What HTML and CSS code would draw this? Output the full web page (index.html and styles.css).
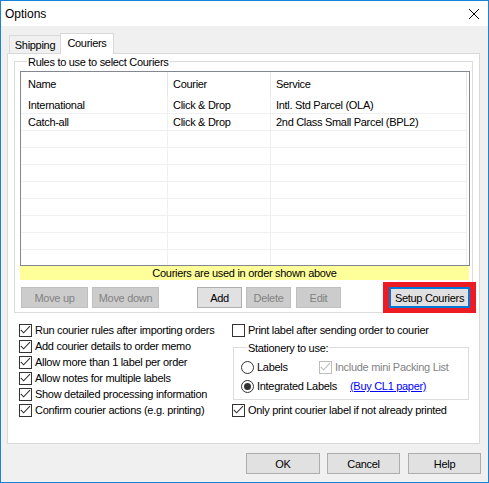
FILE: index.html
```html
<!DOCTYPE html>
<html>
<head>
<meta charset="utf-8">
<title>Options</title>
<link rel="stylesheet" href="styles.css">
</head>
<body>
<div class="window">
  <div class="titlebar">
    <span class="title">Options</span>
    <svg class="close" viewBox="0 0 10 10"><path d="M0 0 L10 10 M10 0 L0 10" stroke="#000" stroke-width="1" fill="none"/></svg>
  </div>
  <div class="content">
    <div class="tabs">
      <div class="tab">Shipping</div>
      <div class="tab active">Couriers</div>
    </div>
    <div class="panel">
      <div class="group rules">
        <div class="legend">Rules to use to select Couriers</div>
        <div class="list">
          <div class="lrow head"><div class="cell c1">Name</div><div class="cell">Courier</div><div class="cell">Service</div></div>
          <div class="lrow"><div class="cell c1">International</div><div class="cell">Click &amp; Drop</div><div class="cell">Intl. Std Parcel (OLA)</div></div>
          <div class="lrow"><div class="cell c1">Catch-all</div><div class="cell">Click &amp; Drop</div><div class="cell">2nd Class Small Parcel (BPL2)</div></div>
          <div class="lrow"><div class="cell c1"></div><div class="cell"></div><div class="cell"></div></div>
          <div class="lrow"><div class="cell c1"></div><div class="cell"></div><div class="cell"></div></div>
          <div class="lrow"><div class="cell c1"></div><div class="cell"></div><div class="cell"></div></div>
          <div class="lrow"><div class="cell c1"></div><div class="cell"></div><div class="cell"></div></div>
          <div class="lrow"><div class="cell c1"></div><div class="cell"></div><div class="cell"></div></div>
          <div class="lrow"><div class="cell c1"></div><div class="cell"></div><div class="cell"></div></div>
          <div class="lrow"><div class="cell c1"></div><div class="cell"></div><div class="cell"></div></div>
          <div class="lrow"><div class="cell c1"></div><div class="cell"></div><div class="cell"></div></div>
        </div>
        <div class="note">Couriers are used in order shown above</div>
        <div class="btnrow">
          <button class="btn b-mu" disabled>Move up</button>
          <button class="btn b-md" disabled>Move down</button>
          <button class="btn b-add">Add</button>
          <button class="btn b-del" disabled>Delete</button>
          <button class="btn b-edit" disabled>Edit</button>
          <span class="hl"><button class="btn b-setup">Setup Couriers</button></span>
        </div>
      </div>
      <div class="options">
        <div class="col">
          <div class="row"><svg class="cb" viewBox="0 0 13 13"><rect x="0.5" y="0.5" width="12" height="12" fill="#fff" stroke="#333"/><path d="M1.8 5.8 L4.6 8.8 L11 2.2" fill="none" stroke="#333" stroke-width="1.1"/></svg><span>Run courier rules after importing orders</span></div>
          <div class="row"><svg class="cb" viewBox="0 0 13 13"><rect x="0.5" y="0.5" width="12" height="12" fill="#fff" stroke="#333"/><path d="M1.8 5.8 L4.6 8.8 L11 2.2" fill="none" stroke="#333" stroke-width="1.1"/></svg><span>Add courier details to order memo</span></div>
          <div class="row"><svg class="cb" viewBox="0 0 13 13"><rect x="0.5" y="0.5" width="12" height="12" fill="#fff" stroke="#333"/><path d="M1.8 5.8 L4.6 8.8 L11 2.2" fill="none" stroke="#333" stroke-width="1.1"/></svg><span>Allow more than 1 label per order</span></div>
          <div class="row"><svg class="cb" viewBox="0 0 13 13"><rect x="0.5" y="0.5" width="12" height="12" fill="#fff" stroke="#333"/><path d="M1.8 5.8 L4.6 8.8 L11 2.2" fill="none" stroke="#333" stroke-width="1.1"/></svg><span>Allow notes for multiple labels</span></div>
          <div class="row"><svg class="cb" viewBox="0 0 13 13"><rect x="0.5" y="0.5" width="12" height="12" fill="#fff" stroke="#333"/><path d="M1.8 5.8 L4.6 8.8 L11 2.2" fill="none" stroke="#333" stroke-width="1.1"/></svg><span>Show detailed processing information</span></div>
          <div class="row"><svg class="cb" viewBox="0 0 13 13"><rect x="0.5" y="0.5" width="12" height="12" fill="#fff" stroke="#333"/><path d="M1.8 5.8 L4.6 8.8 L11 2.2" fill="none" stroke="#333" stroke-width="1.1"/></svg><span>Confirm courier actions (e.g. printing)</span></div>
        </div>
        <div class="col">
          <div class="row"><svg class="cb" viewBox="0 0 13 13"><rect x="0.5" y="0.5" width="12" height="12" fill="#fff" stroke="#333"/></svg><span>Print label after sending order to courier</span></div>
          <div class="group stat">
            <div class="legend">Stationery to use:</div>
            <div class="row r1">
              <span class="opt w78"><svg class="rb" viewBox="0 0 13 13"><circle cx="6.5" cy="6.5" r="6" fill="#fff" stroke="#333"/></svg><span>Labels</span></span>
              <svg class="cb" viewBox="0 0 13 13"><rect x="0.5" y="0.5" width="12" height="12" fill="#fff" stroke="#bcbcbc"/><path d="M1.8 5.8 L4.6 8.8 L11 2.2" fill="none" stroke="#bcbcbc" stroke-width="1.1"/></svg><span class="disabled">Include mini Packing List</span>
            </div>
            <div class="row r2">
              <span class="opt w109"><svg class="rb" viewBox="0 0 13 13"><circle cx="6.5" cy="6.5" r="6" fill="#fff" stroke="#333"/><circle cx="6.5" cy="6.5" r="3.5" fill="#333"/></svg><span>Integrated Labels</span></span>
              <a class="link" href="#">(Buy CL1 paper)</a>
            </div>
          </div>
          <div class="row"><svg class="cb" viewBox="0 0 13 13"><rect x="0.5" y="0.5" width="12" height="12" fill="#fff" stroke="#333"/><path d="M1.8 5.8 L4.6 8.8 L11 2.2" fill="none" stroke="#333" stroke-width="1.1"/></svg><span>Only print courier label if not already printed</span></div>
        </div>
      </div>
    </div>
    <div class="footer">
      <button class="btn b-ok">OK</button>
      <button class="btn b-cancel">Cancel</button>
      <button class="btn b-help">Help</button>
    </div>
  </div>
</div>
</body>
</html>
```

FILE: styles.css
```css
* { box-sizing: border-box; }
html, body { margin: 0; padding: 0; background: #fff; }
body {
  font-family: "Liberation Sans", Arial, sans-serif;
  font-size: 11px;
  letter-spacing: -0.3px;
  color: #000;
}
.window {
  width: 489px;
  height: 483px;
  border: 1px solid #1883d7;
  background: #f0f0f0;
  display: flex;
  flex-direction: column;
}
.titlebar {
  height: 25px;
  flex: none;
  background: #fff;
  display: flex;
  align-items: center;
  justify-content: space-between;
  padding: 0 9px 0 4px;
}
.title { font-size: 12px; letter-spacing: 0; }
.close { width: 10px; height: 10px; display: block; }
.content {
  flex: 1;
  padding: 7px 8px 8px 6px;
  display: flex;
  flex-direction: column;
}
.tabs {
  height: 20px;
  flex: none;
  display: flex;
  align-items: flex-end;
  padding-left: 2px;
}
.tab {
  height: 18px;
  width: 52px;
  border: 1px solid #d9d9d9;
  border-bottom: none;
  text-align: center;
  line-height: 17px;
  padding-top: 1px;
  background: #f0f0f0;
}
.tab.active {
  height: 21px;
  width: 54px;
  margin-left: -1px;
  margin-bottom: -1px;
  background: #fff;
  line-height: 18px;
  padding-top: 0;
  position: relative;
  z-index: 1;
}
.panel {
  height: 391px;
  flex: none;
  background: #fff;
  border: 1px solid #d9d9d9;
  padding: 7px 6px 0 6px;
}
.group { border: 1px solid #dcdcdc; }
.legend {
  width: fit-content;
  margin: -7px 0 0 7px;
  padding: 0 1px;
  height: 14px;
  line-height: 14px;
  background: #fff;
  white-space: nowrap;
}
.rules { padding: 0 2px 4px 5px; }
.list {
  margin-top: 2px;
  height: 195px;
  border: 1px solid #828790;
  overflow: hidden;
  background: #fff;
}
.lrow {
  display: grid;
  grid-template-columns: 147px 103px 196px;
  height: 17px;
}
.lrow .cell {
  border-right: 1px solid #f0f0f0;
  border-bottom: 1px solid #f0f0f0;
  padding-left: 5px;
  line-height: 16px;
  white-space: nowrap;
  overflow: hidden;
}
.lrow .c1 { padding-left: 7px; }
.lrow.head { height: 25px; }
.head .cell {
  border-right-color: #e5e5e5;
  border-bottom: none;
  line-height: 25px;
}
.note {
  height: 14px;
  width: 449px;
  background: #ffff99;
  text-align: center;
  line-height: 14px;
}
.btnrow {
  margin-top: 7px;
  display: flex;
  height: 21px;
}
.btn {
  height: 21px;
  border: 1px solid #adadad;
  background: #e1e1e1;
  font: inherit;
  letter-spacing: inherit;
  color: #000;
  padding: 0;
  flex: none;
}
.btn:disabled {
  background: #cccccc;
  border-color: #bfbfbf;
  color: #838383;
}
.b-mu { margin-left: 1px; width: 67px; }
.b-md { margin-left: 4px; width: 67px; }
.b-add { margin-left: 38px; width: 45px; }
.b-del { margin-left: 4px; width: 45px; }
.b-edit { margin-left: 5px; width: 45px; }
.hl {
  display: flex;
  border-style: solid;
  border-color: #ed1c24;
  border-width: 5px 6px;
  margin: -5px -6px -5px 42px;
}
.b-setup {
  width: 81px;
  border-color: #0078d7;
  box-shadow: inset 0 0 0 1px #0078d7;
}
.options {
  margin-top: 9px;
  padding-left: 5px;
  display: grid;
  grid-template-columns: 213px 237px;
}
.row {
  display: flex;
  align-items: center;
  height: 16px;
  line-height: 16px;
  white-space: nowrap;
}
.cb, .rb {
  width: 13px;
  height: 13px;
  flex: none;
  margin-right: 3px;
  display: block;
}
.stat {
  margin: 9px 0 2px 1px;
  width: 236px;
  padding: 0 0 5px 7px;
}
.stat .legend { margin-left: 6px; }
.stat .r1 { margin-top: 4px; }
.stat .r2 { margin-top: 3px; }
.opt { display: flex; align-items: center; flex: none; }
.w78 { width: 78px; }
.w109 { width: 109px; }
.disabled { color: #838383; }
.link { color: #0000ff; text-decoration: underline; }
.footer {
  margin-top: 9px;
  margin-right: -1px;
  display: flex;
  justify-content: flex-end;
}
.b-ok { width: 74px; }
.b-cancel { width: 73px; margin-left: 7px; }
.b-help { width: 73px; margin-left: 8px; }
```
